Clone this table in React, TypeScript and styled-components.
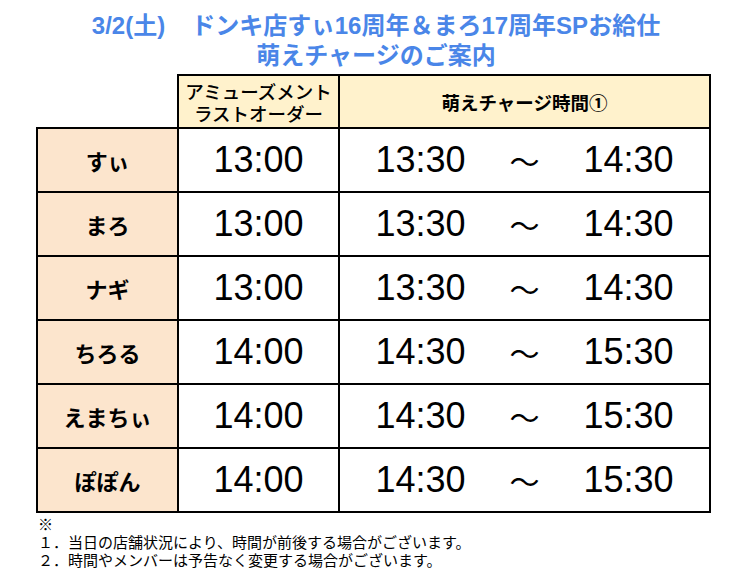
import styled, { createGlobalStyle } from 'styled-components'

const GlobalStyle = createGlobalStyle`
  html, body {
    margin: 0;
    padding: 0;
    background: #ffffff;
  }
  body {
    font-family: 'Liberation Sans', 'Noto Sans CJK JP', sans-serif;
    color: #000000;
  }
`

const Page = styled.div`
  width: 755px;
  height: 582px;
  overflow: hidden;
  padding-left: 36px;
  box-sizing: border-box;
`

const Title = styled.h1`
  margin: 0;
  width: 680px;
  padding-top: 11px;
  margin-bottom: 3px;
  text-align: center;
  font-size: 24px;
  line-height: 30px;
  font-weight: 700;
  color: #4a86e8;
  font-family: 'Liberation Sans', 'Noto Sans CJK JP', sans-serif;
`

const Gap = styled.span`
  display: inline-block;
  width: 26px;
`

const Sheet = styled.table`
  border-collapse: collapse;
  table-layout: fixed;
  width: 673px;
`

const Cell = styled.td<{ $bg?: string }>`
  border: 2px solid #000000;
  background: ${(p) => p.$bg || '#ffffff'};
  text-align: center;
  vertical-align: middle;
  padding: 0;
`

const Blank = styled.td`
  border-top: none;
  border-left: none;
  padding: 0;
`

const HeadRow = styled.tr`
  height: 53px;
`

const BodyRow = styled.tr`
  height: 64px;
`

const HeadLines = styled.div`
  font-family: 'Noto Sans CJK JP', sans-serif;
  font-size: 18.5px;
  line-height: 22px;
  font-weight: 500;
`

const HeadBold = styled.div`
  font-family: 'Noto Sans CJK JP', sans-serif;
  font-size: 18.5px;
  font-weight: 700;
`

const Name = styled.div`
  font-family: 'Noto Sans CJK JP', sans-serif;
  font-size: 22px;
  font-weight: 700;
`

const Time = styled.span`
  font-family: 'Liberation Sans', Arial, sans-serif;
  font-size: 36px;
  line-height: 40px;
`

const Range = styled.div`
  display: flex;
  justify-content: center;
  align-items: center;
  gap: 44px;
`

const Wave = styled.span`
  font-family: 'Noto Sans CJK JP', sans-serif;
  font-size: 30px;
  line-height: 40px;
`

const Notes = styled.div`
  margin-top: 2px;
  padding-left: 2px;
  font-family: 'Noto Sans CJK JP', sans-serif;
  font-size: 15px;
  line-height: 18px;
`

const rows = [
  { name: 'すぃ', last: '13:00', from: '13:30', to: '14:30' },
  { name: 'まろ', last: '13:00', from: '13:30', to: '14:30' },
  { name: 'ナギ', last: '13:00', from: '13:30', to: '14:30' },
  { name: 'ちろる', last: '14:00', from: '14:30', to: '15:30' },
  { name: 'えまちぃ', last: '14:00', from: '14:30', to: '15:30' },
  { name: 'ぽぽん', last: '14:00', from: '14:30', to: '15:30' },
]

export default function App() {
  return (
    <Page>
      <GlobalStyle />
      <Title>
        3/2(土)<Gap />ドンキ店すぃ16周年＆まろ17周年SPお給仕
        <br />
        萌えチャージのご案内
      </Title>
      <Sheet>
        <colgroup>
          <col style={{ width: 141 }} />
          <col style={{ width: 161 }} />
          <col style={{ width: 371 }} />
        </colgroup>
        <tbody>
          <HeadRow>
            <Blank />
            <Cell $bg="#fff2cc">
              <HeadLines>
                アミューズメント
                <br />
                ラストオーダー
              </HeadLines>
            </Cell>
            <Cell $bg="#fff2cc">
              <HeadBold>萌えチャージ時間①</HeadBold>
            </Cell>
          </HeadRow>
          {rows.map((r) => (
            <BodyRow key={r.name}>
              <Cell $bg="#fce5cd">
                <Name>{r.name}</Name>
              </Cell>
              <Cell>
                <Time>{r.last}</Time>
              </Cell>
              <Cell>
                <Range>
                  <Time>{r.from}</Time>
                  <Wave>～</Wave>
                  <Time>{r.to}</Time>
                </Range>
              </Cell>
            </BodyRow>
          ))}
        </tbody>
      </Sheet>
      <Notes>
        ※
        <br />
        １．当日の店舗状況により、時間が前後する場合がございます。
        <br />
        ２．時間やメンバーは予告なく変更する場合がございます。
      </Notes>
    </Page>
  )
}
